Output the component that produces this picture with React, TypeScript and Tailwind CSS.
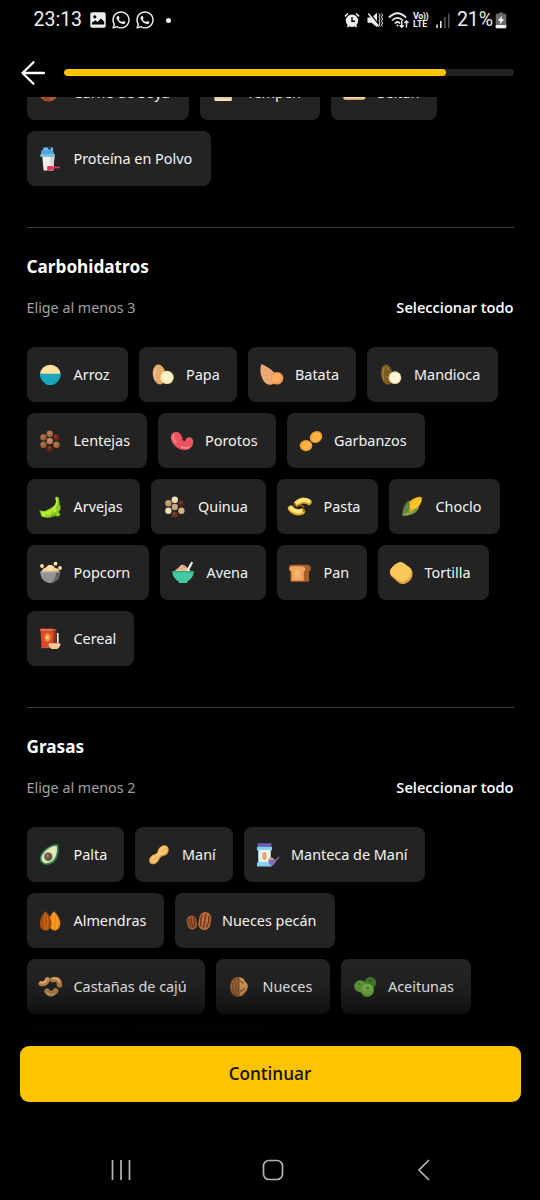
import type { ReactNode } from "react";
import { FaWhatsapp } from "react-icons/fa";

const seeds = (colors: string[]) => {
  const pts = [[13.8, 6.7], [7.4, 10.3], [20.3, 10.3], [13.8, 14], [7.4, 17.8], [20.4, 17.8], [13.8, 21.6]];
  return pts.map(([x, y], i) => (
    <g key={i}>
      <circle cx={x} cy={y} r="3.2" fill={colors[i]} />
      <circle cx={x - 0.7} cy={y - 0.8} r="1.3" fill="#fff" opacity=".18" />
    </g>
  ));
};

const art: Record<string, ReactNode> = {
  soja: <><circle cx="12.5" cy="13" r="9.6" fill="#b5582c" /><path d="M12 18v4.5M8 20l3-1" stroke="#7d3517" strokeWidth="1.2" /></>,
  tempeh: <><rect x="5.5" y="8" width="17.3" height="14" rx="1" fill="#f6e2bb" /><path d="M5.5 19h17.3" stroke="#d8b987" /></>,
  seitan: <><path d="M3 10h22.5v8q0 3-3 3H6q-3 0-3-3z" fill="#c9a66b" /><path d="M4 18.7h21" stroke="#f2ddb0" strokeWidth="1.5" /></>,
  proteina: <>
    <path d="M6.3 11h12.2l-1.3 14.5H7.6z" fill="#f3efe8" /><path d="M14.5 11h4l-1.3 14.5h-3z" fill="#d9d5d0" />
    <path d="M5.5 5h11.5l2 6.8H4.5z" fill="#4fa3d8" /><path d="M7.5 2.5H17v2.8H7z" fill="#73c0ea" /><path d="M12 2.5h3v2h-3z" fill="#173a52" />
    <path d="M4.5 9.2h14.3v2.6H4.5z" fill="#79c4ea" /><path d="M11.2 21h5.5l.5.500h6.500v1.800H17l-.5 2.200h-5.300z" fill="#e0355f" />
  </>,
  arroz: <><path d="M4.2 13a10.1 9.3 0 0 1 20.2 0z" fill="#ffe2a0" /><path d="M3.800 12.800h21q0 5.800-5 9.400-1.500 1.700-3 1.700h-5q-1.500 0-3-1.700-5-3.600-5-9.400z" fill="#17a8bd" /></>,
  papa: <><ellipse cx="10.2" cy="13.5" rx="6.4" ry="10" transform="rotate(-9 10.2 13.5)" fill="#e4ad6d" /><path d="M7 7q-2.8 5-.5 12" stroke="#f3c68e" strokeWidth="1.5" fill="none" /><circle cx="18" cy="16.4" r="6.7" fill="#f8dfa3" /><circle cx="18.3" cy="16.2" r="5.5" fill="#fff1c6" /></>,
  batata: <><path d="M3.4 3Q.8 9.5 4.5 18 8 25 14 23.5q5.5-2 4-9Q14.5 7.5 3.4 3z" fill="#eda978" /><path d="M5 8q2 1 4 1M5 13q2 1 4 1M9 19l3-1" stroke="#d18b60" strokeWidth=".6" fill="none" /><circle cx="19" cy="17.3" r="6.3" fill="#f49350" /><circle cx="18.6" cy="17" r="5" fill="#ffad66" /></>,
  mandioca: <><ellipse cx="9.8" cy="13.6" rx="5.7" ry="10.2" transform="rotate(-8 9.8 13.6)" fill="#7b5b23" /><path d="M7 6q-2.5 7 0 14M10 6l2 3M9 15l2 2" stroke="#b28a42" strokeWidth="1" fill="none" /><circle cx="17.9" cy="16.7" r="6.4" fill="#ead58d" /><circle cx="18.1" cy="16.6" r="5.4" fill="#fff8d8" /></>,
  lentejas: seeds(["#a9673f", "#9d603c", "#682414", "#b97d5a", "#9c5f3b", "#a76842", "#672110"]),
  porotos: <><path d="M8.500 5Q3 5 2.700 10 2.600 15 7.500 19.500 12.500 23.700 18 23 25.500 21.500 25.300 14 24.500 10 21 10.200 18 10.500 17.700 13 16.500 15.500 14.700 13.500 14.600 12 13.500 8.800 11.700 5.200 8.500 5z" fill="#ec555f" /><path d="M14 10.500q.8 4.500 3.200 3.500" stroke="#b92f40" strokeWidth="1.200" fill="none" /><path d="M6 8q-2 4 2 7.500M13.500 20q4 1.800 7 .5" stroke="#ff8d88" strokeWidth="1.500" fill="none" strokeLinecap="round" /></>,
  garbanzos: <><ellipse cx="9" cy="18.6" rx="6.3" ry="5.6" fill="#ef9b2d" /><ellipse cx="9.4" cy="18.6" rx="4.9" ry="4.4" fill="#ffb443" /><ellipse cx="19" cy="10" rx="6.6" ry="5.7" transform="rotate(-38 19 10)" fill="#ef9b2d" /><ellipse cx="19" cy="10.2" rx="5.1" ry="4.5" transform="rotate(-38 19 10)" fill="#ffb443" /></>,
  arvejas: <><path d="M19 4q1.500-.7 3.200 0 1.700 3 1.200 7 3 5-1 8l2 2-1.500 2.500L19.500 23Q11 26 5.500 23.500L3.300 17q3 1.700 6.700.4Q15 15.500 19 11.700q2.300-3.500 0-7.700z" fill="#8dcc21" /><path d="M20.200 5q1.500 5-1 8.700-4 6-13.700 6.800" stroke="#c4f14d" strokeWidth="1.600" fill="none" /><g fill="#b6e937"><circle cx="8" cy="21" r="2.400" /><circle cx="13" cy="19.700" r="2.600" /><circle cx="18" cy="17" r="2.500" /></g><path d="M15 23q4 .5 5-2" stroke="#518b13" fill="none" /></>,
  quinua: seeds(["#eedda9", "#bf986c", "#5b2218", "#c3a078", "#efdfad", "#d7af7a", "#682c20"]),
  pasta: <>
    <g fill="none" strokeLinecap="round"><path d="M11 10.500Q16.500 5.500 22.700 9" stroke="#e5a927" strokeWidth="6" /><path d="M10.500 9.800Q16.500 5 22.500 8" stroke="#ffe480" strokeWidth="3.700" /><path d="M5 15.500Q9 21 16 18.500" stroke="#e5a927" strokeWidth="6.300" /><path d="M4.700 14.900Q9 20 15.500 18" stroke="#ffe480" strokeWidth="3.800" /></g>
    <path d="M11 12.800q5.500-2 7 1.700" stroke="#a16a13" strokeWidth="1.300" fill="none" /><ellipse cx="9.200" cy="11.400" rx="1.100" ry="1.500" fill="#a16a13" /><ellipse cx="17.700" cy="17.500" rx="1.100" ry="1.500" fill="#a16a13" />
  </>,
  choclo: <><path d="M9 14Q11 6 20 4q4-.7 4 1.500Q23 14 15 18.500l-5 2z" fill="#f9b51a" /><path d="M12 15l8-10M15 16l8-9" stroke="#ffd83b" strokeWidth="1.600" /><path d="M10.500 7.500Q4 12 4.300 23q5-3 7-7 .7-4-.8-8.500z" fill="#537b38" /><path d="M4.300 23Q9 20 12 14q.5 3-1 5 7-4 10.500-5Q18 23 4.300 23z" fill="#7d9747" /><path d="M5 22q2-4 5-10M6 22q6-2 10-4" stroke="#a7bd6f" strokeWidth=".7" fill="none" /></>,
  popcorn: <><path d="M5.500 13Q6 9 10 8.500 11 6 14.500 6q3.300 0 4.300 2.700 4.200.5 4.600 4.300z" fill="#fbd193" /><g fill="#ffe2ae"><circle cx="6" cy="7" r="1.900" /><circle cx="19.500" cy="4.700" r="1.900" /><circle cx="24" cy="9" r="1.900" /><circle cx="14" cy="8.500" r="2.600" /></g><path d="M4.200 12.500h20q-.2 7.500-5 10-4.800 3.500-10 0-4.800-2.800-5-10z" fill="#929292" /><path d="M20 12.500h4.200q-.2 7.500-5 10-2.500 1.500-5 1.500 5.800-2.500 5.800-11.500z" fill="#626262" /><path d="M4.500 13h19" stroke="#b8b8b8" /></>,
  avena: <><path d="M5.500 12Q9 9.500 12 6q2-1 4 .8 3 2.700 6 5.500z" fill="#edb98f" /><path d="M12 9l2 1M14 7l2 2" stroke="#cb9067" /><path d="M18.500 11.700 22.700 4" stroke="#eceff2" strokeWidth="2.400" strokeLinecap="round" /><path d="M3.200 12h21.600q-.5 7.800-6.500 10.300V24H9.700v-1.700Q3.700 19.800 3.200 12z" fill="#42c99f" /><path d="M3.500 12.700h21" stroke="#2ba989" strokeWidth="1.300" /></>,
  pan: <><path d="M5.500 5.800h17q3 1.500 2.200 5-.4 1.400-1.700 1.700v10.200H4.500V12.500Q2 11 3 7.500q.7-1.700 2.500-1.700z" fill="#a85e25" /><path d="M6 7.300h10q3.500.5 3.300 3.500-.2 1.300-1.600 1.700v9.200H5.500v-9Q3.300 11.300 3.700 9 4.300 7.500 6 7.300z" fill="#f0a65d" /><path d="M9 11h5v7H9z" fill="#f7b66e" /></>,
  tortilla: <><path d="M11 3.800q2.500-1.500 5.500.2l7 5q2.500 3 2 7.500-1 4.500-5 7-4.500 3-8.500.5l-7-6Q2 15 3 11.500 4.500 8.500 7.500 6z" fill="#dfa13a" /><path d="M11 3.700q2.500-1.200 5.300.4l6.300 4.700q2.500 3 1.400 6.400-1 4-5 6.400-4 2.300-7.500 0l-6.700-5.400Q2.300 13.800 3.500 10.500 5 8 8 5.500z" fill="#fac85a" /></>,
  cereal: <><path d="M4.500 4h15.700v18.700H5.500z" fill="#d94b2e" /><path d="M17.500 5.500h2.700v15h-2.700z" fill="#8e2e21" /><path d="M4.500 4h12v1.500h-12zM5 22.700h9" stroke="#f06b39" strokeWidth=".6" fill="#f47943" /><ellipse cx="11.500" cy="12.500" rx="3" ry="4.300" fill="#f28b36" /><circle cx="11.300" cy="12.500" r="1.700" fill="#ffd35a" /><path d="M21.800 8v10" stroke="#e8e2da" strokeWidth="1.700" /><path d="M12.500 18.700h12.200q-.5 3.500-3.500 5.300h-5.500q-3-1.700-3.200-5.300z" fill="#ffc78a" /><path d="M13 19h11" stroke="#ffe3be" /></>,
  palta: <><path d="M22.500 3.500Q24 14 19 20q-4 4.700-10.500 3.500-5-1.500-4.600-7Q5 11 11 6.800 17.500 2.200 22.500 3.500z" fill="#347d55" /><path d="M20.700 4.700Q22 13 17.500 19q-4 4-8.800 3-3.600-1.500-3.200-5.500Q7 11.500 12 8q5-3.500 8.700-3.300z" fill="#dfeab0" /><circle cx="12.300" cy="15.700" r="4.200" fill="#6e5848" /><circle cx="11.500" cy="14.800" r="1.600" fill="#917964" /></>,
  mani: <><path d="M16 5.500q3-2 6-.5 2.500 2.500 1.300 6-1.500 3.500-5 3.700-2.300.3-3.800 3-.7 3-3.200 4.600-3 2-6 .1-2.200-3-.3-6Q7 13.800 10 13q2.700-.8 3-4 .7-2.300 3-3.500z" fill="#e8a34b" /><path d="M16.500 5.800q2.800-1.500 4.900-.4 1.900 2.300.5 5-1.600 3-5 3.300-2.300.5-3.600 3.300-1 3-3.200 4.200-2 1-4-.3-1.400-2.500.4-4.700 1.500-2 4-2.300 2.800-.9 3.400-4.400.4-2.300 2.600-3.700z" fill="#fac777" /><path d="M8 20l4-5M17 11l4-4" stroke="#d98d37" strokeWidth=".8" /></>,
  manteca: <><path d="M3.800 2.200h13.500v3.600H3.800z" fill="#6661b6" /><path d="M3 5.800h15v3.300l-1 1v11l1 1v3.400H3v-3.400l1-1v-11l-1-1z" fill="#83d2ef" /><path d="M5 9h11v12H5z" fill="#f4f1ed" /><ellipse cx="10.500" cy="15" rx="2.100" ry="4" fill="#e4a673" /><path d="M14 20q0-2 2-4l3 1 2 2z" fill="#d7a27a" /><path d="m14.500 19 6.500.2 3.800-3.700.8.700-4.100 5q-1.500 3.500-4 3.800-3-1-3-6z" fill="#7d71b9" /></>,
  almendras: <><path d="M18 4.200Q25 11 24.200 18q-1 4.500-5 5.700-6-.7-6.400-7.700Q13 9 18 4.200z" fill="#f38a13" /><path d="M18 6q-2 8-1 16M20 9q3 7 0 13" stroke="#ffb035" strokeWidth=".8" fill="none" /><path d="M9.500 4Q15 10 15.700 16q0 6-5.500 7.800-6-.3-6.400-6.800Q4 9.500 9.500 4z" fill="#a94e0b" /><path d="M9.500 6q-3 8-.5 16M11 8q2 8-.5 15" stroke="#d46f16" strokeWidth="1" fill="none" /></>,
  pecan: <><g transform="rotate(-12 7 15)"><rect x="2" y="8.500" width="9.500" height="14" rx="4.700" fill="#a75d32" /><path d="M4 11q-.5 4 1 9M6.700 10v11M9.500 11q1 4-1 9" stroke="#582b17" strokeWidth="1.100" fill="none" /></g><g transform="rotate(10 19.500 14)"><rect x="13.800" y="5" width="12" height="18" rx="6" fill="#bd6c3b" /><path d="M16.300 8q-1.200 7 .8 12M19.700 6.500v15M23 8q1.500 6-.5 12" stroke="#663219" strokeWidth="1.300" fill="none" /></g></>,
  caju: <><g fill="none" strokeLinecap="round"><path d="M5 10.500Q10 11.500 11.500 6.500" stroke="#c68a4c" strokeWidth="5" /><path d="M16.500 6.800Q23.500 5 23.500 12" stroke="#ba7f44" strokeWidth="5.300" /><path d="M11 18.200Q15 23.500 19.500 18" stroke="#c38a50" strokeWidth="5.600" /><path d="M4.500 9.500Q9 10.500 10.500 6M17 5.500Q22.500 5 23.500 9M11 20q3.500 3.500 7 1" stroke="#e9ba7b" strokeWidth="1.400" /></g></>,
  nueces: <><path d="M13.500 3.700 14 24Q8 23.500 6 19 4 14 6.300 8.500 9 4.500 13.500 3.700z" fill="#a7683e" /><path d="M14.300 4q5 1 5.700 4.500 3.500 2.500 2.700 6-.2 3-2.700 5-1.700 3.500-5.700 4z" fill="#d99b59" /><path d="M13 6q-4 0-3 3-4 1-2 4-2 3 1 5 0 4 4 4M13 10q-4 1-2 4-1 3 2 5M15 8q3 0 3 3M15 18q3 0 5-3" stroke="#7a482b" strokeWidth="1" fill="none" /></>,
  aceitunas: <><circle cx="19.300" cy="9.800" r="5.900" fill="#467a29" /><circle cx="9.300" cy="13.200" r="6" fill="#659f3b" /><circle cx="16.300" cy="17.200" r="6.700" fill="#6eae42" /><circle cx="16.300" cy="16.600" r="5" fill="#7ebb4e" /><circle cx="19.500" cy="8" r="1.200" fill="#2f581c" /><circle cx="8" cy="11" r="1.100" fill="#457b29" /><circle cx="16.800" cy="15" r="1.400" fill="#4c8630" /></>,
};

type Item = { name: string; icon: string; box: string };
const row = (...items: [string, string, string][]): Item[] => items.map(([name, icon, box]) => ({ name, icon, box }));

const proteinas = [
  row(["Carne de Soya", "soja", "w-[162px]"], ["Tempeh", "tempeh", "w-[120px]"], ["Seitán", "seitan", "w-[106px]"]),
  row(["Proteína en Polvo", "proteina", "w-[184px]"]),
];
const carbohidratos = [
  row(["Arroz", "arroz", "w-[101.5px]"], ["Papa", "papa", "w-[98px]"], ["Batata", "batata", "w-[108px]"], ["Mandioca", "mandioca", "w-[131px]"]),
  row(["Lentejas", "lentejas", "w-[120.5px]"], ["Porotos", "porotos", "w-[118px]"], ["Garbanzos", "garbanzos", "w-[138px]"]),
  row(["Arvejas", "arvejas", "w-[113.5px]"], ["Quinua", "quinua", "w-[114.5px]"], ["Pasta", "pasta", "w-[101px]"], ["Choclo", "choclo", "w-[111px]"]),
  row(["Popcorn", "popcorn", "w-[122px]"], ["Avena", "avena", "w-[106px]"], ["Pan", "pan", "w-[90px]"], ["Tortilla", "tortilla", "w-[111px]"]),
  row(["Cereal", "cereal", "w-[107px]"]),
];
const grasas = [
  row(["Palta", "palta", "w-[97.5px]"], ["Maní", "mani", "w-[98px]"], ["Manteca de Maní", "manteca", "w-[181px]"]),
  row(["Almendras", "almendras", "w-[137.5px]"], ["Nueces pecán", "pecan", "w-[159.5px]"]),
  row(["Castañas de cajú", "caju", "w-[178px]"], ["Nueces", "nueces", "w-[114.5px]"], ["Aceitunas", "aceitunas", "w-[130px]"]),
];

function Chips({ rows }: { rows: Item[][] }) {
  return (
    <div className="flex flex-col gap-[11px]">
      {rows.map((items, i) => (
        <div key={i} className="flex gap-[11px]">
          {items.map((it) => (
            <button key={it.name} className={`flex h-[55px] shrink-0 items-center gap-[9.5px] rounded-[8px] bg-[#232323] pt-px pl-[9.5px] text-[14.4px] whitespace-nowrap text-[#f4f4f4] ${it.box}`}>
              <svg viewBox="0 0 28 28" className="size-7 shrink-0">{art[it.icon]}</svg>
              <span>{it.name}</span>
            </button>
          ))}
        </div>
      ))}
    </div>
  );
}

function Section({ title, min, rows }: { title: string; min: number; rows: Item[][] }) {
  return (
    <section>
      <div className="mt-[41px] h-px bg-[#3a3a3a]" />
      <h2 className="mt-[27px] h-6 text-[17.2px] leading-6 font-bold text-white">{title}</h2>
      <div className="mt-[17px] mb-[27px] flex h-6 items-center justify-between">
        <span className="text-[14.3px] text-[#a2a2a2]">Elige al menos {min}</span>
        <button className="text-[14.64px] font-semibold text-white [font-family:'Open_Sans',sans-serif]">Seleccionar todo</button>
      </div>
      <Chips rows={rows} />
    </section>
  );
}

function StatusBar() {
  return (
    <div className="flex h-10 shrink-0 items-center pr-[33px] pl-[33.500px] text-[#eeeeee]">
      <span className="w-[56.500px] text-[19.500px] [font-family:Roboto,sans-serif]">23:13</span>
      <svg viewBox="0 0 16 16" className="mr-[5px] size-4"><path fillRule="evenodd" fill="currentColor" d="M2 .3h12A1.700 1.700 0 0 1 15.700 2v12a1.700 1.700 0 0 1-1.700 1.700H2A1.700 1.700 0 0 1 .300 14V2A1.700 1.700 0 0 1 2 .3zM1.800 12.500h12.400V9.800L11 6.500 7.500 10 5.200 8.200 1.800 11zM4.800 3.200a1.600 1.600 0 1 0 0 3.200 1.600 1.600 0 0 0 0-3.200z" /></svg>
      <FaWhatsapp className="mr-[3.500px] size-5" />
      <FaWhatsapp className="size-5" />
      <span className="ml-[11px] size-[5px] rounded-full bg-current" />
      <svg viewBox="0 0 16 16" className="ml-auto size-4">
        <circle cx="8" cy="8.800" r="6.200" fill="currentColor" /><path d="M1 4.300 4 1.500M15 4.300 12 1.500M3.300 15l1.500-1.500M12.700 15l-1.500-1.500" stroke="currentColor" strokeWidth="1.600" /><path d="M8 5v4.200h3" stroke="#000" strokeWidth="1.400" fill="none" />
      </svg>
      <svg viewBox="0 0 16 16" className="ml-[7px] size-4">
        <path d="M.5 5.500h4L10 .8v14.400l-5.500-4.500h-4z" fill="currentColor" /><path d="m2.500.8 10 13" stroke="#000" strokeWidth="1.400" /><path d="m1.300 1.500 10.500 13" stroke="currentColor" strokeWidth="1.400" /><path d="m12 1.500 1 1.500-1 2 1 2-1 2 1 2-1 2 1 1.500M14.500 1.500l1 1.500-1 2 1 2-1 2 1 2-1 2 1 1.500" stroke="currentColor" fill="none" strokeWidth="1" />
      </svg>
      <svg viewBox="0 0 22 18" fill="none" stroke="currentColor" className="ml-[5px] h-[18px] w-[22px]">
        <path d="M1 6.500q8.500-8.500 17 0" strokeWidth="1.800" /><path d="M4 9.500q5.500-5.500 11 0M6.800 12.300q2.700-2.600 5.400 0" strokeWidth="1.700" /><path d="M13.700 9.800v6.500m-2-2 2 2 2-2M18.500 16.500V10m-2 2 2-2 2 2" strokeWidth="1.400" />
        <circle cx="9.500" cy="14.500" r="1" fill="currentColor" stroke="none" />
      </svg>
      <span className="ml-[3.500px] flex w-[17px] flex-col text-[9px] leading-[8.500px] font-bold [font-family:Roboto,sans-serif]"><span className="tracking-[-0.500px]">Vo))</span><span className="tracking-[-0.100px]">LTE</span></span>
      <svg viewBox="0 0 14 15" className="ml-[6px] h-[15px] w-[14px]"><path d="M.3 11.500h1.500V15H.3zM4 8h1.600v7H4z" fill="currentColor" /><path d="M8 4h1.600v11H8zM12 .5h1.500V15H12z" fill="#555" /></svg>
      <span className="ml-[7px] w-[37px] text-[19.500px] tracking-[-0.100px] [font-family:Roboto,sans-serif]">21%</span>
      <svg viewBox="0 0 12 17" className="ml-[1px] h-[17px] w-3"><path d="M4 .5h4v1.300h2q1.300 0 1.300 1.300V15q0 1.300-1.300 1.300H2Q.7 16.300.7 15V3.100Q.7 1.800 2 1.800h2z" fill="#6a6a6a" /><path d="M.7 13h10.600v2q0 1.300-1.300 1.300H2Q.7 16.300.7 15z" fill="#f4f4f4" /><path d="M7 3.800 2.800 8.800h2.700L4.800 12.500 9.200 7.300H6.500z" fill="#fff" /></svg>
    </div>
  );
}

export default function App() {
  return (
    <div className="flex h-[1200px] w-[540px] flex-col overflow-hidden bg-black [font-family:'Noto_Sans',sans-serif]">
      <StatusBar />
      <header className="flex h-[57px] shrink-0 items-center pt-2 pr-[26.500px] pl-[19.500px]">
        <svg viewBox="0 0 26 26" className="size-[26px]"><path d="M24 13H2.500M13.500 2.300 2.500 13l11 10.700" fill="none" stroke="#fff" strokeWidth="2.300" strokeLinecap="round" strokeLinejoin="round" /></svg>
        <div className="ml-[18.5px] h-[7px] flex-1 overflow-hidden rounded-full bg-[#222222]"><div className="h-full w-[382px] rounded-full bg-[#ffc400]" /></div>
      </header>
      <div className="relative h-[941px] shrink-0 overflow-hidden px-[26.500px]">
        <div className="-mt-8">
          <Chips rows={proteinas} />
          <Section title="Carbohidatros" min={3} rows={carbohidratos} />
          <Section title="Grasas" min={2} rows={grasas} />
          <div className="mt-[11px] flex gap-[11px]"><div className="h-[55px] w-[93px] rounded-[8px] bg-[#232323]" /><div className="h-[55px] w-[135px] rounded-[8px] bg-[#232323]" /></div>
        </div>
        <div className="absolute inset-x-0 bottom-0 h-[80px] bg-[linear-gradient(to_bottom,transparent_8px,rgba(0,0,0,.08)_26px,rgba(0,0,0,.22)_38px,rgba(0,0,0,.55)_54px,rgba(0,0,0,.88)_66px,#000_75px)]" />
      </div>
      <div className="shrink-0 px-[19.500px] pt-2">
        <button className="h-[56px] w-full rounded-[9px] bg-[#ffc400] text-[17.1px] font-semibold text-[#171400] [font-family:'Open_Sans',sans-serif]">Continuar</button>
      </div>
      <nav className="mt-[38px] flex h-[60px] shrink-0 items-center justify-between pr-[104px] pl-[109px] text-[#b5b5b5]">
        <svg viewBox="0 0 24 24" className="size-6" stroke="currentColor" strokeWidth="1.700"><path d="M3.500 2v20M12 2v20M20.500 2v20" /></svg>
        <svg viewBox="0 0 24 24" className="size-6" stroke="currentColor" strokeWidth="1.700" fill="none"><rect x="2.500" y="2.500" width="19" height="19" rx="5.500" /></svg>
        <svg viewBox="0 0 24 24" className="size-6" stroke="currentColor" strokeWidth="1.700" fill="none"><path d="M17 2 7 12l10 10" /></svg>
      </nav>
    </div>
  );
}
